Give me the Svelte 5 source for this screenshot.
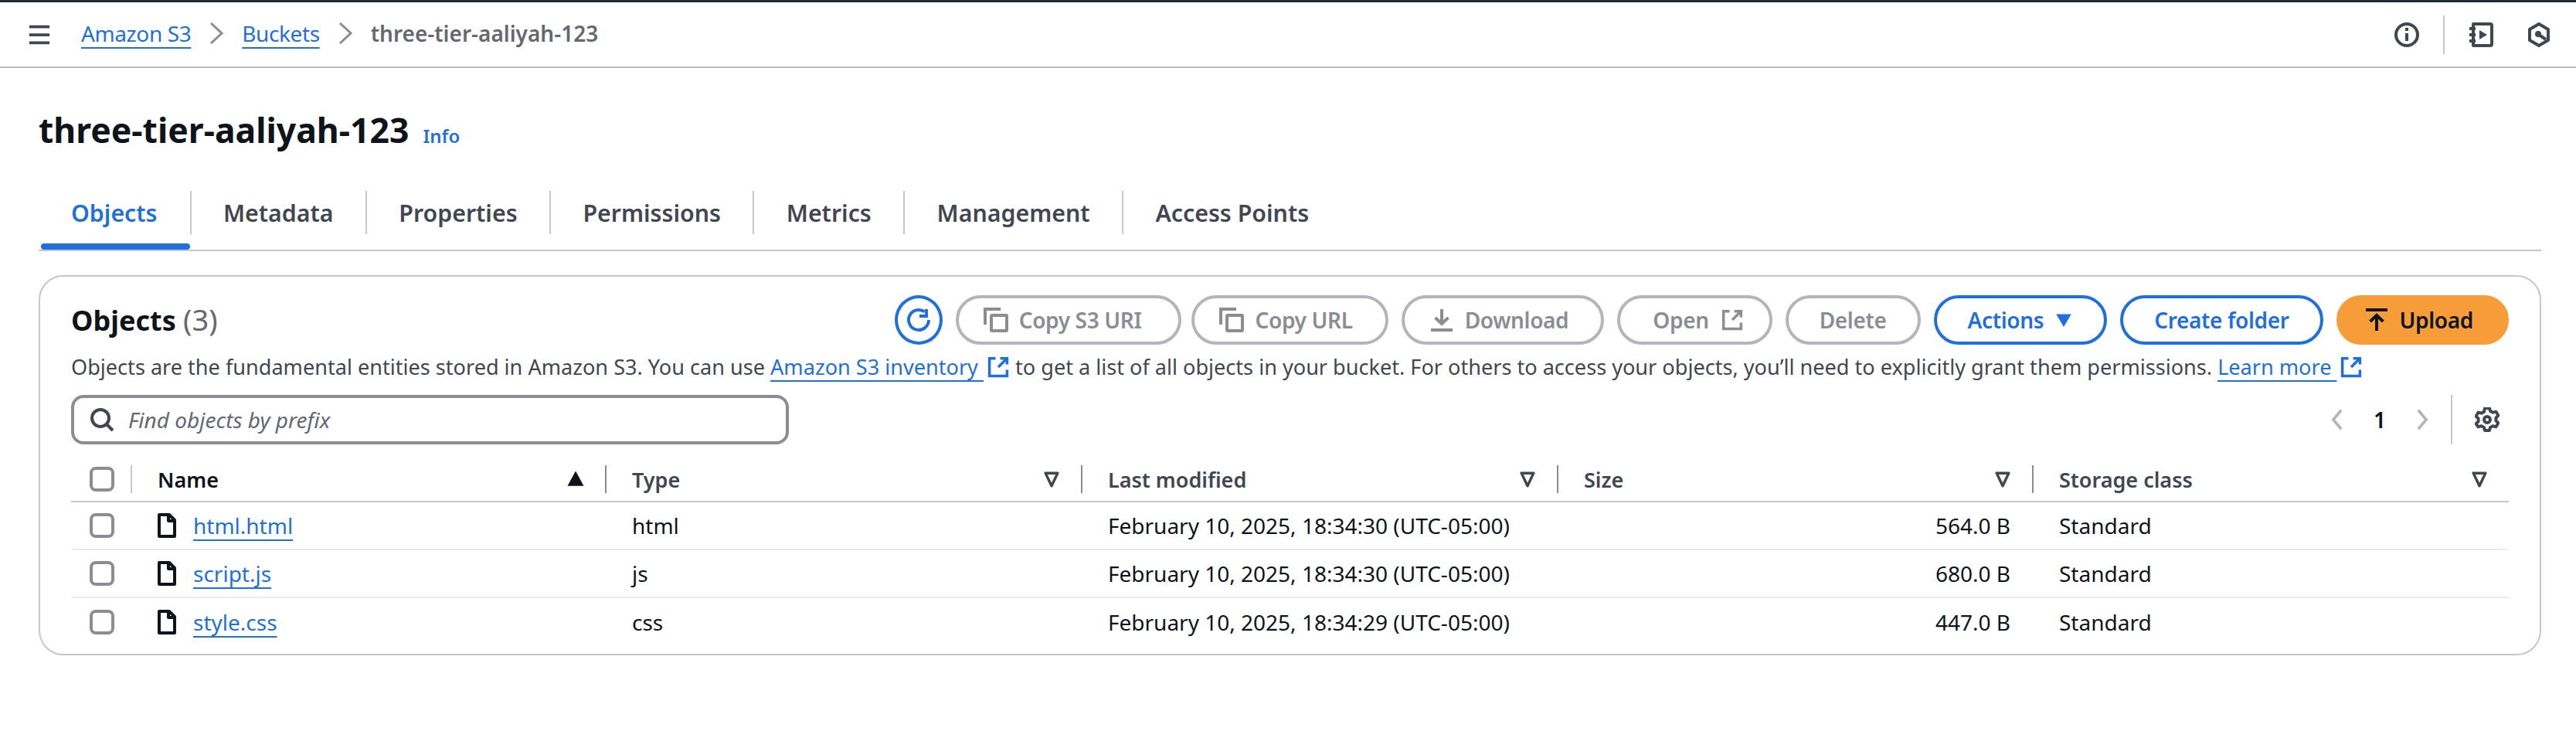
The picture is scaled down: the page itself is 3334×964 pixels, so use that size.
<script>
  const tabs = ['Objects', 'Metadata', 'Properties', 'Permissions', 'Metrics', 'Management', 'Access Points'];
  const columns = [
    { label: 'Type', sort: true },
    { label: 'Last modified', sort: true },
    { label: 'Size', sort: true },
    { label: 'Storage class', sort: true }
  ];
  const rows = [
    { name: 'html.html', type: 'html', modified: 'February 10, 2025, 18:34:30 (UTC-05:00)', size: '564.0 B' },
    { name: 'script.js', type: 'js', modified: 'February 10, 2025, 18:34:30 (UTC-05:00)', size: '680.0 B' },
    { name: 'style.css', type: 'css', modified: 'February 10, 2025, 18:34:29 (UTC-05:00)', size: '447.0 B' }
  ];
</script>

{#snippet external()}
  <svg class="ext" viewBox="0 0 16 16" fill="none" stroke="currentColor" stroke-width="2"><path d="M6 1.500H1.500v13h13V10M9.500 1.500h5V6M14.500 1.500 8 8"/></svg>
{/snippet}

{#snippet copyIcon()}
  <svg class="ico" viewBox="0 0 16 16" fill="none" stroke="currentColor" stroke-width="2"><path d="M1 11V1h10"/><rect x="5" y="5" width="10" height="10" rx="0.500"/></svg>
{/snippet}

{#snippet caret()}
  <svg class="caret" viewBox="0 0 16 16" fill="none" stroke="currentColor" stroke-width="2" stroke-linejoin="round"><path d="M3.500 3.500h9L8 13z"/></svg>
{/snippet}

<header class="topbar">
  <svg class="ico menu" viewBox="0 0 16 16" fill="none" stroke="currentColor" stroke-width="2"><path d="M1 2.500h14M1 8h14M1 13.500h14"/></svg>
  <nav class="crumbs">
    <a href="#s3">Amazon S3</a>
    <svg class="chev" viewBox="0 0 9 14" fill="none" stroke="currentColor" stroke-width="1.500"><path d="M1 .5 8 7l-7 6.500"/></svg>
    <a href="#buckets">Buckets</a>
    <svg class="chev" viewBox="0 0 9 14" fill="none" stroke="currentColor" stroke-width="1.500"><path d="M1 .5 8 7l-7 6.500"/></svg>
    <span class="here">three-tier-aaliyah-123</span>
  </nav>
  <div class="top-tools">
    <svg class="ico" viewBox="0 0 16 16" fill="none" stroke="currentColor" stroke-width="2"><circle cx="8" cy="8" r="7"/><path d="M8 7v5M8 3.500v2"/></svg>
    <span class="top-sep"></span>
    <svg class="ico" viewBox="0 0 16 16" fill="none" stroke="currentColor" stroke-width="2"><path d="M3 1h11a1 1 0 0 1 1 1v12a1 1 0 0 1-1 1H3z" stroke-linejoin="round"/><path d="M.5 4h4M.5 8h4M.5 12h4"/><path d="M7 5v6l5-3z" fill="currentColor" stroke="none"/></svg>
    <svg class="ico hex" viewBox="0 0 16 16" fill="none" stroke="currentColor" stroke-width="2"><path d="M8 1l6 3.500v7L8 15l-6-3.500v-7z" stroke-linejoin="round"/><circle cx="7.500" cy="7.500" r="2" fill="currentColor" stroke="none"/><path d="M8 8l4.500 3"/></svg>
  </div>
</header>

<main class="page">
  <div class="title-row">
    <h1>three-tier-aaliyah-123</h1>
    <a class="info" href="#info">Info</a>
  </div>

  <div class="tabs">
    {#each tabs as tab, i}
      <div class="tab" class:active={i === 0}><span>{tab}</span></div>
    {/each}
  </div>

  <section class="panel">
    <div class="panel-head">
      <h2>Objects <span>(3)</span></h2>
      <div class="actions">
        <button class="btn round primary" aria-label="Refresh">
          <svg class="ico" viewBox="0 0 16 16" fill="none" stroke="currentColor" stroke-width="2"><path d="M14.500 8A6.500 6.500 0 1 1 11.800 2.700"/><path d="M13 1v4.500H8.500"/></svg>
        </button>
        <button class="btn off icon-left s3">{@render copyIcon()}Copy S3 URI</button>
        <button class="btn off icon-left">{@render copyIcon()}Copy URL</button>
        <button class="btn off icon-left">
          <svg class="ico" viewBox="0 0 16 16" fill="none" stroke="currentColor" stroke-width="2"><path d="M8 1v9.500M3.800 6.500 8 10.500l4.200-4M1 14.500h14"/></svg>Download
        </button>
        <button class="btn off icon-right">Open {@render external()}</button>
        <button class="btn off">Delete</button>
        <button class="btn primary">Actions
          <svg class="drop" viewBox="0 0 16 16" fill="currentColor"><path d="M1.500 3h13L8 14z"/></svg>
        </button>
        <button class="btn primary">Create folder</button>
        <button class="btn solid icon-left">
          <svg class="ico" viewBox="0 0 16 16" fill="none" stroke="currentColor" stroke-width="2"><path d="M1 1.500h14M8 15V5M3.800 9 8 5l4.200 4"/></svg>Upload
        </button>
      </div>
    </div>

    <p class="desc">Objects are the fundamental entities stored in Amazon S3. You can use <a href="#inv">Amazon S3 inventory {@render external()}</a> to get a list of all objects in your bucket. For others to access your objects, you’ll need to explicitly grant them permissions. <a href="#more">Learn more {@render external()}</a></p>

    <div class="filter-row">
      <div class="search">
        <svg class="ico" viewBox="0 0 16 16" fill="none" stroke="currentColor" stroke-width="2"><circle cx="7" cy="7" r="5.500"/><path d="M11 11l4 4"/></svg>
        <span>Find objects by prefix</span>
      </div>
      <div class="pager">
        <svg class="ico pg" viewBox="0 0 16 16" fill="none" stroke="currentColor" stroke-width="2"><path d="M11 1 5 8l6 7"/></svg>
        <b>1</b>
        <svg class="ico pg" viewBox="0 0 16 16" fill="none" stroke="currentColor" stroke-width="2"><path d="M5 1l6 7-6 7"/></svg>
        <span class="pg-sep"></span>
        <svg class="ico gear" viewBox="0 0 16 16" fill="none" stroke="currentColor" stroke-width="2" stroke-linejoin="round"><path d="M6.500 1h3l.5 2 1.700 1 2-.6 1.500 2.600-1.500 1.500v2l1.500 1.500-1.500 2.600-2-.6-1.700 1-.5 2h-3l-.5-2-1.700-1-2 .6L.8 11.500l1.500-1.500V8L.8 6.500 2.300 3.900l2 .6 1.700-1z" transform="translate(0 -.500) scale(1 .97)"/><circle cx="8" cy="8" r="2"/></svg>
      </div>
    </div>

    <div class="table">
      <div class="row head">
        <div class="cell check"><span class="box"></span></div>
        <div class="cell name">
          <span class="th-name">Name</span>
          <svg class="caret" viewBox="0 0 16 16" fill="currentColor"><path d="M8 2l6 11H2z"/></svg>
        </div>
        {#each columns as col}
          <div class="cell th">
            <span>{col.label}</span>
            {@render caret()}
          </div>
        {/each}
      </div>
      {#each rows as row}
        <div class="row">
          <div class="cell check"><span class="box"></span></div>
          <div class="cell name">
            <svg class="file" viewBox="0 0 12 16" fill="none" stroke="currentColor" stroke-width="2" stroke-linejoin="round"><path d="M1 1h6.500L11 4.500V15H1z"/><path d="M7 1v4h4"/></svg>
            <a href="#file">{row.name}</a>
          </div>
          <div class="cell">{row.type}</div>
          <div class="cell">{row.modified}</div>
          <div class="cell size">{row.size}</div>
          <div class="cell">Standard</div>
        </div>
      {/each}
    </div>
  </section>
</main>

<style>
  :global(body) {
    margin: 0;
    background: #fff;
    color: #0f141a;
    font-family: "Noto Sans", "Open Sans", sans-serif;
    font-size: 28px;
  }
  a { color: #1f6fdc; text-decoration: underline; text-decoration-thickness: 2px; text-underline-offset: 7px; }
  h1, h2, p { margin: 0; }
  .ico { width: 32px; height: 32px; flex-shrink: 0; }

  .topbar {
    display: flex;
    align-items: center;
    height: 83px;
    border-top: 3px solid #232b37;
    border-bottom: 2px solid #b9b9c0;
    padding: 0 32px 0 36px;
    color: #424650;
  }
  .menu { width: 30px; height: 30px; }
  .crumbs { display: flex; align-items: center; margin-left: 39px; margin-bottom: 3px; font-size: 28px; }
  .crumbs a { letter-spacing: -0.4px; }
  .chev { width: 18px; height: 28px; margin: 0 24px; color: #8c8c94; }
  .here { font-weight: 600; color: #656871; }
  .top-tools { margin-left: auto; display: flex; align-items: center; gap: 31px; }
  .top-tools .hex { margin-left: 12px; }
  .top-sep { width: 2px; height: 50px; background: #c6c6cd; }

  .page { padding: 0 45px 0 50px; }
  .title-row { display: flex; align-items: baseline; gap: 18px; margin-top: 50px; }
  h1 { font-size: 44.500px; line-height: 60px; font-weight: 700; }
  .info { font-size: 24px; font-weight: 600; text-decoration: none; }

  .tabs { display: flex; align-items: flex-start; margin-top: 49px; border-bottom: 2px solid #c6c6cd; height: 76px; }
  .tab { position: relative; height: 56px; display: flex; align-items: center; padding: 0 41.400px; border-right: 2px solid #c6c6cd; color: #424650; font-weight: 600; font-size: 30.300px; }
  .tab:last-child { border-right: none; }
  .tab.active { color: #1f6fdc; padding: 0 42px; }
  .tab.active::after {
    content: "";
    position: absolute;
    left: 3px;
    right: 0;
    bottom: -20px;
    height: 8px;
    border-radius: 4px;
    background: #1f6fdc;
  }

  .panel {
    margin-top: 31px;
    border: 2px solid #c6c6cd;
    border-radius: 32px;
    padding: 23px 40px 27px;
    height: 492px;
    box-sizing: border-box;
  }
  .panel-head { display: flex; align-items: center; justify-content: space-between; }
  h2 { font-size: 36px; font-weight: 700; line-height: 64px; }
  h2 span { font-weight: 400; color: #656871; font-size: 38px; }
  .actions { display: flex; gap: 17px; }

  .btn {
    display: inline-flex;
    align-items: center;
    gap: 14px;
    height: 64px;
    box-sizing: border-box;
    padding: 0 40px;
    border-radius: 32px;
    border: 4px solid;
    background: #fff;
    font: 600 28px "Noto Sans", "Open Sans", sans-serif;
    letter-spacing: -0.35px;
  }
  .btn.icon-left { padding: 0 42px 0 32px; }
  .btn.icon-left.s3 { padding-right: 48px; margin-right: -4px; }
  .btn.icon-right { padding: 0 34px 0 42px; }
  .btn.round { width: 62px; padding: 0; justify-content: center; border-radius: 50%; }
  .btn.off { color: #8c8c94; border-color: #b4b4bb; }
  .btn.primary { color: #1f6fdc; border-color: #1f6fdc; }
  .btn.solid { background: #f69d3a; border-color: #f69d3a; color: #0f141a; }
  .drop { width: 24px; height: 24px; margin-left: 0; }
  .ext { width: 28px; height: 28px; vertical-align: -4px; margin-left: 2px; }
  .desc .ext { width: 30px; margin-left: 4px; }

  .desc { color: #424650; font-size: 27.100px; line-height: 38px; margin-top: 9px; white-space: nowrap; }

  .filter-row { display: flex; justify-content: space-between; align-items: center; margin-top: 17px; }
  .search {
    display: flex;
    align-items: center;
    gap: 18px;
    width: 929px;
    height: 64px;
    box-sizing: border-box;
    border: 4px solid #8c8c94;
    border-radius: 16px;
    padding: 0 20px;
    color: #656871;
    font-style: italic;
  }
  .search .ico { color: #424650; }
  .pager { display: flex; align-items: center; color: #8c8c94; padding-right: 12px; }
  .pager b { font-weight: 600; color: #0f141a; margin: 0 33px; }
  .pg { color: #b4b4bb; width: 28px; height: 32px; }
  .pg-sep { width: 2px; height: 64px; background: #c6c6cd; margin: 0 29px 0 23px; }
  .gear { color: #424650; }

  .table { margin-top: 20px; }
  .row {
    display: grid;
    grid-template-columns: 77px 614px 616px 616px 615px 1fr;
    height: 62px;
    border-bottom: 2px solid #ebebf0;
    box-sizing: border-box;
    align-items: center;
  }
  .row:last-child { border-bottom: none; }
  .row.head { border-bottom-color: #c6c6cd; height: 55px; padding-bottom: 3px; font-weight: 600; font-size: 27px; }
  .cell { padding-left: 35px; display: flex; align-items: center; min-width: 0; white-space: nowrap; }
  .cell.check { padding-left: 24px; }
  .box { width: 32px; height: 32px; box-sizing: border-box; border: 4px solid #8c8c94; border-radius: 8px; }
  .cell.name { gap: 22px; }
  .file { width: 24px; height: 32px; flex-shrink: 0; }
  .head .cell { height: 36px; border-left: 2px solid #8c8c94; padding-left: 33px; padding-right: 24px; justify-content: space-between; color: #424650; }
  .head .cell.check { border-left: none; padding-left: 24px; padding-right: 0; }
  .head .cell.name { border-left-color: #c6c6cd; color: #0f141a; }
  .caret { width: 28px; height: 28px; }
  .cell.size { justify-content: flex-end; padding-right: 28px; }
</style>
